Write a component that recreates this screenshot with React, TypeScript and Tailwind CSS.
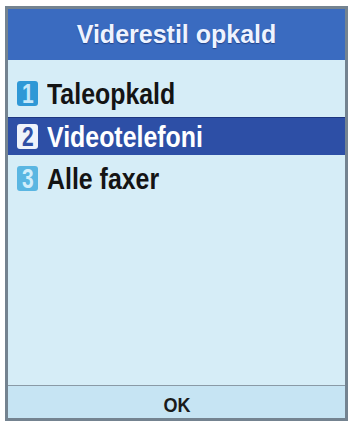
import React from "react";

const items = [
  { n: "1", label: "Taleopkald", active: false, box: "bg-[#2f98d6] text-[#c6e8fa]" },
  { n: "2", label: "Videotelefoni", active: true, box: "bg-[#eef3fb] text-[#2f4fa6]" },
  { n: "3", label: "Alle faxer", active: false, box: "bg-[#5ab6e2] text-[#d2eefb]" },
];

export default function App() {
  return (
    <div className="w-[351px] h-[429px] bg-white pt-[6px] pl-[5px] overflow-hidden" style={{ fontFamily: '"Liberation Sans", Arial, sans-serif' }}>
      <div className="w-[343px] h-[415px] border-[3px] border-[#748390] flex flex-col bg-[#d6edf7]">
        <div className="h-[51px] bg-[#3a6bc0] flex items-center justify-center shrink-0">
          <span className="text-[25px] font-bold text-[#eef3ff] leading-none [text-shadow:0_1px_1px_rgba(20,40,100,0.6)]">
            Viderestil opkald
          </span>
        </div>
        <div className="flex-1 pt-[12px] flex flex-col">
          {items.map((it) => (
            <div
              key={it.n}
              className={
                it.active
                  ? "h-[38px] my-[2px] bg-[#2d4fa6] border-t border-[#1d3680] flex items-center pl-[9px]"
                  : "h-[43px] flex items-center pl-[9px]"
              }
            >
              <div className={`w-[21px] h-[25px] rounded-[3px] flex items-center justify-center text-[28px] font-bold leading-none ${it.box}`}>
                <span className="inline-block scale-x-[0.75]">{it.n}</span>
              </div>
              <span
                className={`ml-[9px] inline-block origin-left scale-x-[0.83] text-[30px] font-bold leading-none whitespace-nowrap ${
                  it.active ? "text-white" : "text-[#141414]"
                }`}
              >
                {it.label}
              </span>
            </div>
          ))}
        </div>
        <div className="h-[33px] border-t border-[#8a9aa6] bg-[#c6e4f3] flex items-center justify-center shrink-0 pt-[5px]">
          <span className="inline-block scale-x-[0.9] text-[20px] font-bold text-[#1a1a1a] leading-none">OK</span>
        </div>
      </div>
    </div>
  );
}
